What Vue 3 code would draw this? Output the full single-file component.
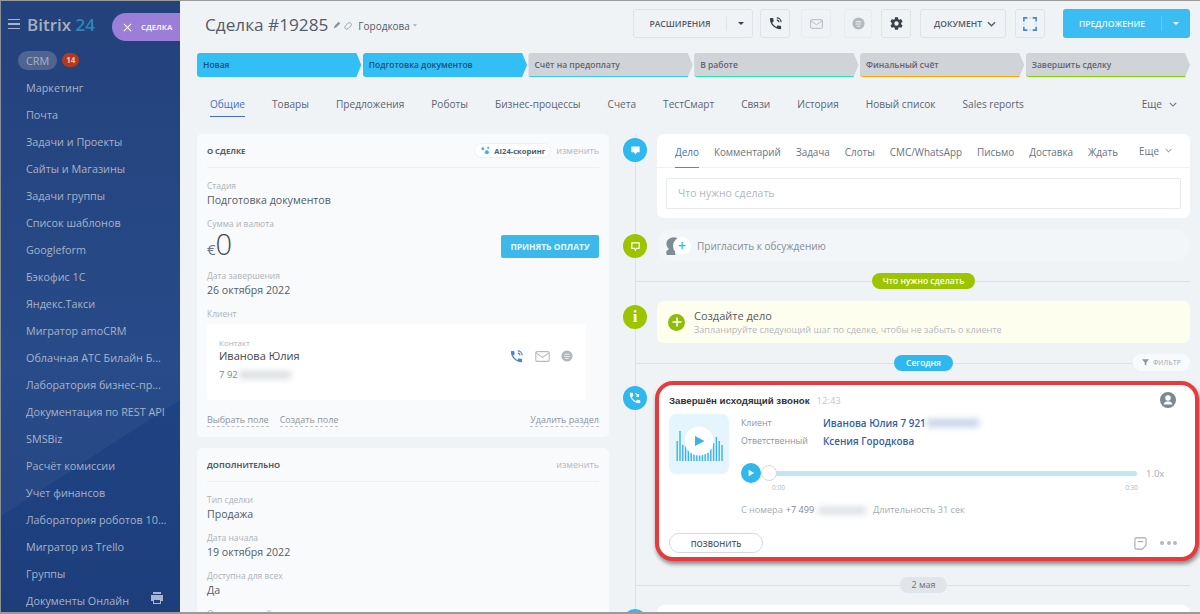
<script setup>
const menu = ['Маркетинг', 'Почта', 'Задачи и Проекты', 'Сайты и Магазины', 'Задачи группы', 'Список шаблонов', 'Googleform', 'Бэкофис 1С', 'Яндекс.Такси', 'Мигратор amoCRM', 'Облачная АТС Билайн Б...', 'Лаборатория бизнес-пр...', 'Документация по REST API', 'SMSBiz', 'Расчёт комиссии', 'Учет финансов', 'Лаборатория роботов 10...', 'Мигратор из Trello', 'Группы', 'Документы Онлайн']

const stages = [
  { name: 'Новая', cls: 'done' },
  { name: 'Подготовка документов', cls: 'done' },
  { name: 'Счёт на предоплату', color: '#3bc8f5' },
  { name: 'В работе', color: '#2fe6b0' },
  { name: 'Финальный счёт', color: '#ffa900' },
  { name: 'Завершить сделку', color: '#7bd500' }
]

const tabs = ['Товары', 'Предложения', 'Роботы', 'Бизнес-процессы', 'Счета', 'ТестСмарт', 'Связи', 'История', 'Новый список', 'Sales reports']
const editorTabs = ['Комментарий', 'Задача', 'Слоты', 'СМС/WhatsApp', 'Письмо', 'Доставка', 'Ждать']

const extraFields = [
  { label: 'Тип сделки', value: 'Продажа' },
  { label: 'Дата начала', value: '19 октября 2022' },
  { label: 'Доступна для всех', value: 'Да' },
  { label: 'Ответственный', value: '' }
]

const waveBars = [20, 30, 16, 24, 28, 18, 12, 8, 6, 6, 7, 8, 12, 18, 24, 20, 16]

const phonePath = 'M6.6 10.8c1.4 2.8 3.8 5.1 6.6 6.6l2.2-2.2c.3-.3.7-.4 1-.2 1.1.4 2.3.6 3.6.6.6 0 1 .4 1 1V20c0 .6-.4 1-1 1C10.6 21 3 13.4 3 4c0-.6.4-1 1-1h3.5c.6 0 1 .4 1 1 0 1.3.2 2.5.6 3.6.1.3 0 .7-.2 1z'
const gearPath = 'M19.4 13c.04-.32.1-.66.1-1s-.06-.68-.1-1l2.1-1.65c.2-.15.25-.42.12-.64l-2-3.46c-.12-.22-.38-.3-.6-.22l-2.5 1c-.5-.4-1.05-.7-1.66-.94l-.38-2.65A.5.5 0 0 0 14 2h-4a.5.5 0 0 0-.5.42l-.38 2.65c-.6.24-1.15.56-1.66.94l-2.5-1a.5.5 0 0 0-.6.22l-2 3.46c-.13.22-.07.5.12.64L4.6 11c-.04.32-.1.66-.1 1s.06.68.1 1l-2.1 1.65c-.2.15-.25.42-.12.64l2 3.46c.12.22.38.3.6.22l2.5-1c.5.4 1.05.7 1.66.94l.38 2.65c.04.24.25.42.5.42h4c.25 0 .46-.18.5-.42l.38-2.65c.6-.24 1.15-.56 1.66-.94l2.5 1c.22.08.48 0 .6-.22l2-3.46c.12-.22.07-.5-.12-.64zM12 15.5a3.5 3.5 0 1 1 0-7 3.5 3.5 0 0 1 0 7z'
</script>

<template>
  <div class="page">
    <aside class="sidebar">
      <div class="logo-row">
        <span class="burger"><i></i><i></i><i></i></span>
        <span class="logo">Bitrix <b>24</b></span>
      </div>
      <div class="crm-row">
        <span class="crm">CRM</span>
        <span class="badge">14</span>
      </div>
      <div v-for="item in menu" :key="item" class="menu-item">{{ item }}</div>
      <svg class="print" viewBox="0 0 14 14" width="14" height="14">
        <rect x="3" y="1" width="8" height="2" fill="#a9b6cb" />
        <path d="M1 4h12v6h-2v3H3v-3H1z" fill="#a9b6cb" />
        <rect x="4" y="9" width="6" height="3" fill="#1e4180" />
      </svg>
      <div class="close-pill">
        <svg viewBox="0 0 10 10" width="9" height="9"><path d="M1 1l8 8M9 1l-8 8" stroke="#fff" stroke-width="1.2" /></svg>
        <span>СДЕЛКА</span>
      </div>
    </aside>

    <main class="main">
      <header class="header">
        <h1 class="title">Сделка #19285</h1>
        <svg class="pen" viewBox="0 0 10 10" width="8" height="8"><path d="M1 9l1-3 5-5 2 2-5 5z" fill="#8a929c" /></svg>
        <svg class="chain" viewBox="0 0 10 10" width="9" height="9"><path d="M1.5 5.5l3-3a1.8 1.8 0 0 1 3 3l-3 3a1.8 1.8 0 0 1-3-3z" fill="none" stroke="#9aa1a9" stroke-width="1.1" /></svg>
        <span class="owner">Городкова</span>
        <span class="owner-caret"></span>

        <div class="tools">
          <button class="btn ext"><span>РАСШИРЕНИЯ</span><i class="sep"></i><i class="caret dark"></i></button>
          <button class="btn square">
            <svg viewBox="0 0 24 24" width="15" height="15"><path :d="phonePath" fill="#3a4049" /><path d="M14 3a7 7 0 0 1 7 7M14 6.5a3.5 3.5 0 0 1 3.5 3.5" fill="none" stroke="#3a4049" stroke-width="1.8" /></svg>
          </button>
          <button class="btn square mail">
            <svg viewBox="0 0 16 12" width="13" height="10"><rect x=".7" y=".7" width="14.6" height="10.6" rx="1.5" fill="none" stroke="#b5bac0" stroke-width="1.2" /><path d="M1 2l7 5 7-5" fill="none" stroke="#b5bac0" stroke-width="1.2" /></svg>
          </button>
          <button class="btn square chat">
            <svg viewBox="0 0 14 14" width="13" height="13"><circle cx="7" cy="7" r="6.5" fill="#b3b8bd" /><path d="M4 5h6M4 7.5h6M5 10h4" stroke="#e8ebee" stroke-width="1.2" /></svg>
          </button>
          <button class="btn square gear">
            <svg viewBox="0 0 24 24" width="15" height="15"><path :d="gearPath" fill="#3a4049" /></svg>
          </button>
          <button class="btn doc"><span>ДОКУМЕНТ</span><svg viewBox="0 0 10 6" width="9" height="6"><path d="M1 1l4 4 4-4" fill="none" stroke="#535c69" stroke-width="1.5" /></svg></button>
          <button class="btn square expand">
            <svg viewBox="0 0 16 16" width="14" height="14"><path d="M1 5V1h4M11 1h4v4M15 11v4h-4M5 15H1v-4" fill="none" stroke="#3f86d8" stroke-width="1.8" /><path d="M7 1h2M7 15h2M1 7v2M15 7v2" stroke="#b8d3f0" stroke-width="1.2" /></svg>
          </button>
          <button class="btn primary"><span>ПРЕДЛОЖЕНИЕ</span><i class="sep"></i><i class="caret"></i></button>
        </div>
      </header>

      <div class="stages">
        <div v-for="s in stages" :key="s.name" class="stage" :class="s.cls" :style="s.color ? { borderBottomColor: s.color } : null">{{ s.name }}</div>
      </div>

      <nav class="tabs">
        <span class="tab active">Общие</span>
        <span v-for="t in tabs" :key="t" class="tab">{{ t }}</span>
        <span class="tab more">Еще
          <svg viewBox="0 0 10 6" width="8" height="5"><path d="M1 1l4 4 4-4" fill="none" stroke="#6a737f" stroke-width="1.3" /></svg>
        </span>
      </nav>

      <div class="body">
        <section class="left">
          <div class="panel first">
            <div class="panel-head">
              <span class="panel-title">О СДЕЛКЕ</span>
              <span class="scoring">
                <svg viewBox="0 0 10 10" width="9" height="9"><circle cx="2" cy="3" r="1.6" fill="#2fb8ee" /><circle cx="8" cy="2" r="1.2" fill="#2fb8ee" /><circle cx="6.5" cy="7" r="2.2" fill="#2fb8ee" /></svg>
                AI24-скоринг
              </span>
              <span class="edit">изменить</span>
            </div>
            <div class="label l-stage">Стадия</div>
            <div class="value">Подготовка документов</div>
            <div class="label l-sum">Сумма и валюта</div>
            <div class="sum-row">
              <span class="sum"><small>€</small>0</span>
              <button class="pay">ПРИНЯТЬ ОПЛАТУ</button>
            </div>
            <div class="label l-date">Дата завершения</div>
            <div class="value">26 октября 2022</div>
            <div class="label l-client">Клиент</div>
            <div class="client">
              <div class="client-info">
                <div class="contact-label">Контакт</div>
                <div class="contact-name">Иванова Юлия</div>
                <div class="contact-phone">7 92<i class="blur"></i></div>
              </div>
              <div class="client-icons">
                <svg viewBox="0 0 24 24" width="15" height="15"><path :d="phonePath" fill="#4a86d0" /><path d="M14 3a7 7 0 0 1 7 7M14 6.5a3.5 3.5 0 0 1 3.5 3.5" fill="none" stroke="#4a86d0" stroke-width="1.8" /></svg>
                <svg viewBox="0 0 16 12" width="15" height="11"><rect x=".7" y=".7" width="14.6" height="10.6" rx="1.5" fill="none" stroke="#b5bac0" stroke-width="1.2" /><path d="M1 2l7 5 7-5" fill="none" stroke="#b5bac0" stroke-width="1.2" /></svg>
                <svg viewBox="0 0 14 14" width="12" height="12"><circle cx="7" cy="7" r="6.5" fill="#b3b8bd" /><path d="M4 5h6M4 7.5h6M5 10h4" stroke="#e8ebee" stroke-width="1.2" /></svg>
              </div>
            </div>
            <div class="panel-links">
              <a>Выбрать поле</a>
              <a>Создать поле</a>
              <a class="right">Удалить раздел</a>
            </div>
          </div>

          <div class="panel second">
            <div class="panel-head">
              <span class="panel-title">ДОПОЛНИТЕЛЬНО</span>
              <span class="edit">изменить</span>
            </div>
            <div v-for="f in extraFields" :key="f.label" class="field">
              <div class="label">{{ f.label }}</div>
              <div class="value">{{ f.value }}</div>
            </div>
          </div>
        </section>

        <section class="timeline">
          <div class="row">
            <span class="dot blue">
              <svg viewBox="0 0 12 12" width="11" height="11"><path d="M1.5 1.5h9V8h-3L6 10.5 4.5 8h-3z" fill="#fff" /></svg>
            </span>
            <div class="card editor">
              <div class="editor-tabs">
                <span class="etab active">Дело</span>
                <span v-for="t in editorTabs" :key="t" class="etab">{{ t }}</span>
                <span class="etab more">Еще
                  <svg viewBox="0 0 10 6" width="7" height="5"><path d="M1 1l4 4 4-4" fill="none" stroke="#6a737f" stroke-width="1.3" /></svg>
                </span>
              </div>
              <div class="editor-input">Что нужно сделать</div>
            </div>
          </div>

          <div class="row">
            <span class="dot green">
              <svg viewBox="0 0 12 12" width="11" height="11"><path d="M2 2h8v6H7l-1 2-1-2H2z" fill="none" stroke="#fff" stroke-width="1.3" /></svg>
            </span>
            <div class="invite">
              <span class="invite-icon">
                <svg viewBox="0 0 14 18" width="15" height="18"><path d="M12 1.5A7 7 0 0 0 5 1C2 2 .5 5 1 8c.5 2 1.5 3 2.5 4L1 14c-.5 2 0 3.500 .5 4H10c-.5-1.500-.5-3 0-4l-2-1.500c2-.5 3-2 3-3z" fill="#7f8b98" /></svg>
                <span class="plus-badge">+</span>
              </span>
              <span>Пригласить к обсуждению</span>
            </div>
          </div>

          <div class="divider"><span class="pill lime">Что нужно сделать</span></div>

          <div class="row">
            <span class="dot green info">i</span>
            <div class="todo">
              <span class="todo-plus">
                <svg viewBox="0 0 10 10" width="10" height="10"><path d="M5 .5v9M.5 5h9" stroke="#fff" stroke-width="1.5" /></svg>
              </span>
              <div>
                <div class="todo-title">Создайте дело</div>
                <div class="todo-sub">Запланируйте следующий шаг по сделке, чтобы не забыть о клиенте</div>
              </div>
            </div>
          </div>

          <div class="divider">
            <span class="pill sky">Сегодня</span>
            <span class="filter">
              <svg viewBox="0 0 10 10" width="7" height="7"><path d="M0 .5h10L6.2 5v4.5L3.8 8V5z" fill="#8f97a0" /></svg>
              ФИЛЬТР
            </span>
          </div>

          <div class="row call-row">
            <span class="dot blue call-dot">
              <svg viewBox="0 0 24 24" width="14" height="14"><path :d="phonePath" fill="#fff" /><path d="M13 4l5 5M14 9h4V5" fill="none" stroke="#fff" stroke-width="2" /></svg>
            </span>
            <div class="call">
              <div class="call-head">
                <span class="call-title">Завершён исходящий звонок</span>
                <span class="call-time">12:43</span>
                <svg class="call-user" viewBox="0 0 16 16" width="16" height="16"><circle cx="8" cy="8" r="8" fill="#7d8894" /><circle cx="8" cy="6" r="2.8" fill="#fff" /><path d="M3.5 12.5c.5-2.5 2.5-3 4.5-3s4 .5 4.5 3z" fill="#fff" /></svg>
              </div>
              <div class="call-main">
                <div class="tile">
                  <svg viewBox="0 0 60 60" width="60" height="60">
                    <rect v-for="(h, i) in waveBars" :key="i" :x="7.5 + i * 2.8" :y="47 - h" width="1.4" :height="h" fill="#37b5ea" />
                    <circle cx="30" cy="27" r="14.5" fill="#fff" />
                    <path d="M26 22l9.5 5-9.5 5z" fill="#37b5ea" />
                  </svg>
                </div>
                <div class="call-info">
                  <div class="info-row"><span class="info-label">Клиент</span><a class="info-link">Иванова Юлия 7 921<i class="blur link-blur"></i></a></div>
                  <div class="info-row"><span class="info-label">Ответственный</span><a class="info-link">Ксения Городкова</a></div>
                  <div class="player">
                    <span class="play">
                      <svg viewBox="0 0 10 10" width="8" height="8"><path d="M2 1l7 4-7 4z" fill="#fff" /></svg>
                    </span>
                    <div class="track"><span class="knob"></span></div>
                    <span class="speed">1.0x</span>
                  </div>
                  <div class="times"><span>0:00</span><span>0:30</span></div>
                  <div class="call-meta">С номера <b>+7 499</b><i class="blur num-blur"></i>Длительность 31 сек</div>
                </div>
              </div>
              <div class="call-foot">
                <button class="callback">ПОЗВОНИТЬ</button>
                <svg viewBox="0 0 14 14" width="13" height="13"><path d="M1 2.5A1.5 1.5 0 0 1 2.5 1h9A1.5 1.5 0 0 1 13 2.5V9l-4 4H2.5A1.5 1.5 0 0 1 1 11.5z" fill="none" stroke="#a4abb3" stroke-width="1.2" /><path d="M4 5h6" stroke="#a4abb3" stroke-width="1.2" /></svg>
                <span class="dots"><i></i><i></i><i></i></span>
              </div>
            </div>
          </div>

          <div class="divider date"><span class="pill gray">2 мая</span></div>

          <div class="row">
            <span class="dot blue"></span>
            <div class="card last"></div>
          </div>
        </section>
      </div>
    </main>
  </div>
</template>

<style>
html, body {
  margin: 0;
  background: #fff;
}
</style>

<style scoped>
.page {
  display: flex;
  width: 1200px;
  height: 614px;
  overflow: hidden;
  box-sizing: border-box;
  border-top: 1px solid #9a9a9a;
  border-bottom: 2px solid #9a9a9a;
  border-left: 1px solid #8a8f96;
  font-family: "Open Sans", "Liberation Sans", sans-serif;
  color: #535c69;
}

/* sidebar */
.sidebar {
  position: relative;
  flex: 0 0 179px;
  padding-top: 11px;
  background:
    linear-gradient(147deg, rgba(255, 255, 255, 0.04) 0 70.7%, rgba(255, 255, 255, 0) 70.9%),
    linear-gradient(180deg, #1a3a76, #1f4484 60%, #1d3e7b);
  color: #a8b2c6;
}
.logo-row {
  display: flex;
  align-items: center;
  height: 24px;
  padding-left: 7px;
}
.burger {
  display: flex;
  flex-direction: column;
  gap: 3px;
  width: 12px;
  margin-right: 7px;
}
.burger i {
  display: block;
  height: 1.5px;
  background: #a9b3c6;
}
.logo {
  font-size: 17px;
  font-weight: 600;
  color: #a7afbe;
  white-space: nowrap;
}
.logo b {
  font-weight: 600;
  color: #2b87b8;
}
.crm-row {
  display: flex;
  align-items: center;
  gap: 5px;
  height: 20px;
  margin-top: 14px;
  margin-left: 17px;
}
.crm {
  padding: 0 8px;
  height: 19px;
  line-height: 19px;
  border-radius: 10px;
  background: #4f6591;
  font-size: 10.8px;
}
.badge {
  padding: 0 4px;
  height: 14px;
  line-height: 14px;
  border-radius: 7px;
  background: #b5391f;
  color: #e8c9bd;
  font-size: 8px;
  font-weight: 700;
}
.menu-item {
  height: 27px;
  line-height: 27px;
  padding-left: 25px;
  font-size: 10.8px;
  white-space: nowrap;
}
.crm-row + .menu-item {
  margin-top: 4px;
}
.print {
  position: absolute;
  left: 149px;
  top: 590px;
}
.close-pill {
  position: absolute;
  top: 12px;
  right: 0;
  display: flex;
  align-items: center;
  gap: 9px;
  width: 68px;
  height: 28px;
  box-sizing: border-box;
  padding-left: 11px;
  border-radius: 14px 0 0 14px;
  background: #9a7ed8;
  color: #f1edf9;
  font-size: 7.7px;
  font-weight: 700;
}

/* main column */
.main {
  flex: 1;
  min-width: 0;
  padding: 8px 10px 0 17px;
  background: #eff3f6;
}
.header {
  display: flex;
  align-items: center;
  height: 29px;
  padding-left: 8px;
}
.title {
  margin: 2px 0 0;
  font-size: 17.2px;
  font-weight: 400;
  color: #535c69;
  white-space: nowrap;
}
.pen {
  margin-left: 5px;
  margin-top: 3px;
}
.chain {
  margin-left: 3px;
  margin-top: 3px;
}
.owner {
  margin-left: 5px;
  margin-top: 4px;
  font-size: 10px;
}
.owner-caret {
  margin: 4px 0 0 3px;
  border: 2.5px solid transparent;
  border-top: 3px solid #b5bac0;
  border-bottom: 0;
}
.tools {
  display: flex;
  margin-left: auto;
}
.btn {
  display: flex;
  align-items: center;
  justify-content: center;
  box-sizing: border-box;
  height: 29px;
  padding: 0;
  border: 1px solid #dfe3e7;
  border-radius: 3px;
  background: transparent;
  color: #535c69;
  font-family: inherit;
  font-size: 8.6px;
  font-weight: 600;
}
.ext {
  width: 120px;
}
.ext span {
  width: 91px;
}
.sep {
  width: 1px;
  height: 15px;
  background: #dfe3e7;
}
.ext .sep + .caret {
  margin-left: 11px;
}
.caret {
  width: 0;
  margin-right: 8px;
  border: 3px solid transparent;
  border-top: 3px solid #fff;
  border-bottom: 0;
}
.caret.dark {
  border-top-color: #3a4049;
}
.square {
  width: 30px;
  margin-left: 7px;
}
.mail {
  margin-left: 11px;
  border-color: #e8ebee;
}
.chat {
  width: 28px;
  margin-left: 13px;
  border-color: #e8ebee;
}
.square.gear {
  margin-left: 9px;
}
.doc {
  width: 86px;
  margin-left: 9px;
  padding-left: 4px;
  gap: 5px;
}
.expand {
  margin-left: 9px;
}
.primary {
  justify-content: flex-start;
  width: 127px;
  margin-left: 18px;
  border: 0;
  background: #3bbcf2;
  color: #eaf7fd;
}
.primary span {
  width: 98px;
}
.primary .caret {
  margin: 0 0 0 11px;
}
.primary .sep {
  background: #63caf4;
}

.stages {
  display: flex;
  gap: 1.4px;
  margin-top: 15px;
}
.stage {
  flex: 1;
  box-sizing: border-box;
  height: 24px;
  line-height: 24px;
  padding-left: 6px;
  border-radius: 3px 0 0 3px;
  border-bottom: 1.5px solid #d0d3d8;
  background: #d0d3d8;
  clip-path: polygon(0 0, calc(100% - 5px) 0, 100% 50%, calc(100% - 5px) 100%, 0 100%);
  color: #5d6672;
  font-size: 8.5px;
  font-weight: 600;
  white-space: nowrap;
}
.stage.done {
  border-bottom: 0;
  background: #32bff6;
  color: #1e4f70;
}

.tabs {
  display: flex;
  gap: 27px;
  height: 24px;
  margin-top: 16px;
  padding-left: 13px;
}
.tab {
  font-size: 10.1px;
  font-weight: 500;
  line-height: 22px;
  color: #5c6570;
  white-space: nowrap;
}
.tab.active {
  color: #3f6fc8;
  border-bottom: 1px solid #3f6fc8;
  height: 23px;
}
.tab.more {
  display: flex;
  align-items: center;
  gap: 7px;
  height: 22px;
  margin-left: auto;
  margin-right: 13px;
}

.body {
  display: flex;
  margin-top: 17px;
}

/* left column */
.left {
  flex: 0 0 412px;
}
.panel {
  box-sizing: border-box;
  padding: 0 10px;
  border-radius: 5px;
  background: #f8fafc;
}
.panel.first {
  height: 303px;
}
.panel.second {
  margin-top: 11px;
  height: 180px;
}
.panel-head {
  display: flex;
  align-items: center;
  box-sizing: border-box;
  height: 34px;
  border-bottom: 1px solid #eef1f4;
}
.panel-title {
  margin-right: auto;
  font-size: 7.7px;
  font-weight: 700;
  color: #535c69;
}
.scoring {
  display: flex;
  align-items: center;
  gap: 4px;
  box-sizing: border-box;
  width: 77px;
  height: 15px;
  padding-left: 6px;
  border: 1px solid #eff2f5;
  border-radius: 8px;
  background: #fff;
  font-size: 7.6px;
  font-weight: 700;
  white-space: nowrap;
}
.edit {
  margin-left: 5px;
  font-size: 9px;
  color: #b3b8bf;
}
.label {
  font-size: 8.5px;
  line-height: 13px;
  color: #aeb3ba;
}
.value {
  font-size: 10.6px;
  line-height: 17px;
  color: #535c69;
}
.l-stage {
  margin-top: 10.5px;
}
.l-sum {
  margin-top: 8px;
}
.sum-row {
  display: flex;
  align-items: center;
  justify-content: space-between;
  height: 29px;
  margin-top: 2px;
}
.sum {
  font-size: 29px;
  font-weight: 300;
  line-height: 29px;
  color: #444c57;
}
.sum small {
  font-size: 15px;
  font-weight: 400;
  color: #6a737f;
}
.pay {
  width: 98px;
  height: 23px;
  padding: 0;
  border: 0;
  border-radius: 2px;
  background: #3db8ea;
  color: #eaf7fd;
  font-family: inherit;
  font-size: 8.5px;
  font-weight: 700;
}
.l-date {
  margin-top: 8.5px;
}
.l-client {
  margin-top: 8px;
}
.client {
  display: flex;
  align-items: center;
  justify-content: space-between;
  box-sizing: border-box;
  width: 379px;
  height: 76px;
  margin-top: 3.5px;
  padding: 0 13px 0 12px;
  border-radius: 3px;
  background: #fff;
}
.client-info {
  margin-top: -4px;
}
.contact-label {
  font-size: 8px;
  line-height: 11px;
  color: #aeb3ba;
}
.contact-name {
  font-size: 11px;
  line-height: 16px;
  color: #3f4650;
}
.contact-phone {
  display: flex;
  align-items: center;
  margin-top: 3px;
  font-size: 9.5px;
  line-height: 15px;
  color: #7b838d;
}
.blur {
  display: inline-block;
  width: 52px;
  height: 8px;
  margin-left: 1px;
  background: #d9dde1;
  filter: blur(3px);
}
.client-icons {
  display: flex;
  align-items: center;
  gap: 11px;
  margin-top: -11px;
}
.panel-links {
  display: flex;
  gap: 11px;
  margin-top: 14px;
  font-size: 9px;
  color: #8d949d;
}
.panel-links a {
  border-bottom: 1px dashed #bfc4ca;
  line-height: 12px;
}
.panel-links .right {
  margin-left: auto;
}
.field {
  margin-top: 11px;
}
.field + .field {
  margin-top: 8px;
}

/* timeline */
.timeline {
  position: relative;
  flex: 1;
  min-width: 0;
  margin-left: 14px;
}
.timeline::before {
  content: "";
  position: absolute;
  left: 12px;
  top: 0;
  bottom: -100px;
  width: 1px;
  background: #dde2e6;
}
.row {
  position: relative;
  display: flex;
  gap: 10px;
  margin-top: 12px;
}
.row:first-child {
  margin-top: 0;
}
.dot {
  display: flex;
  flex: 0 0 24px;
  align-items: center;
  justify-content: center;
  width: 24px;
  height: 24px;
  margin-top: 4px;
  border-radius: 50%;
}
.dot.blue {
  background: #2fb8ee;
}
.dot.green {
  background: #9dc400;
}
.info {
  font-family: "Liberation Serif", serif;
  font-size: 17px;
  font-weight: 700;
  color: #fff;
}
.card {
  flex: 1;
  min-width: 0;
  border-radius: 7px;
  background: #fff;
}
.editor {
  height: 84px;
}
.editor-tabs {
  display: flex;
  gap: 15px;
  box-sizing: border-box;
  height: 34px;
  padding-left: 18px;
  border-bottom: 1px solid #eef1f4;
}
.etab {
  font-size: 9.9px;
  line-height: 36px;
  color: #6a737f;
  white-space: nowrap;
}
.etab.active {
  box-sizing: border-box;
  height: 34px;
  border-bottom: 1px solid #3f8fd8;
  color: #3f6fc8;
}
.etab.more {
  display: flex;
  align-items: center;
  gap: 6px;
  margin-left: auto;
  margin-right: 18px;
}
.editor-input {
  box-sizing: border-box;
  height: 31px;
  margin: 10px 9px 0;
  padding-left: 11px;
  border: 1px solid #e8ebee;
  border-radius: 2px;
  font-size: 10.5px;
  line-height: 29px;
  color: #b3b8bf;
}
.invite {
  display: flex;
  flex: 1;
  align-items: center;
  gap: 6px;
  height: 31px;
  padding-left: 8px;
  border-radius: 15px;
  background: #f3f6f8;
  font-size: 10px;
  color: #858d97;
}
.invite-icon {
  position: relative;
  display: block;
  width: 26px;
  height: 18px;
}
.plus-badge {
  position: absolute;
  left: 8px;
  top: 0;
  width: 18px;
  height: 18px;
  border-radius: 50%;
  background: #fff;
  color: #2fb8ee;
  font-size: 14px;
  font-weight: 600;
  line-height: 17px;
  text-align: center;
}
.divider {
  position: relative;
  display: flex;
  justify-content: center;
  height: 16px;
  margin-top: 12px;
  padding-left: 34px;
}
.divider::before {
  content: "";
  position: absolute;
  left: 12px;
  right: 0;
  top: 8px;
  height: 1px;
  background: #dde2e6;
}
.pill {
  position: relative;
  padding: 0 11px;
  border-radius: 8px;
  font-size: 8.5px;
  font-weight: 600;
  line-height: 16px;
  color: #fff;
  white-space: nowrap;
}
.pill.lime {
  background: #9dc400;
}
.pill.sky {
  padding: 0 12px;
  background: #2fb8ee;
}
.pill.gray {
  background: #dfe5e8;
  color: #6a737f;
  font-size: 9px;
  font-weight: 500;
}
.filter {
  position: absolute;
  right: 0;
  top: -1px;
  display: flex;
  align-items: center;
  gap: 4px;
  height: 17px;
  padding: 0 9px;
  border-radius: 8px;
  background: #f8fafb;
  font-size: 6.5px;
  color: #9aa1a9;
  letter-spacing: 0.3px;
}
.todo {
  display: flex;
  flex: 1;
  align-items: center;
  gap: 9px;
  height: 42px;
  padding-left: 11px;
  border-radius: 7px;
  background: #fefeee;
}
.todo-plus {
  display: flex;
  align-items: center;
  justify-content: center;
  width: 17px;
  height: 17px;
  border-radius: 50%;
  background: #8fbc0a;
}
.todo-title {
  font-size: 11px;
  line-height: 14px;
  color: #535c69;
}
.todo-sub {
  font-size: 9.1px;
  line-height: 13px;
  color: #b3b8bf;
}

/* call card with the red highlight */
.call-row {
  margin-top: 10px;
}
.call-dot {
  margin-top: 5px;
}
.call {
  flex: 1;
  min-width: 0;
  box-sizing: border-box;
  height: 180px;
  margin: 0 -9px 0 -2px;
  padding: 5px 16px 0 10px;
  border: 4px solid #e8393b;
  border-radius: 18px;
  background: #fff;
  box-shadow: 1px 3px 4px rgba(0, 0, 0, 0.45);
}
.call-head {
  display: flex;
  align-items: center;
  height: 20px;
}
.call-title {
  font-family: "Liberation Sans", sans-serif;
  font-size: 9.7px;
  font-weight: 700;
  color: #333;
}
.call-time {
  margin-left: 7px;
  font-size: 9.5px;
  color: #c3c7cc;
}
.call-user {
  margin-left: auto;
  margin-right: 3px;
}
.call-main {
  display: flex;
  gap: 12px;
  margin-top: 4px;
}
.tile {
  flex: 0 0 60px;
  height: 60px;
  border-radius: 7px;
  background: #e5f5fd;
}
.call-info {
  flex: 1;
  min-width: 0;
}
.info-row {
  display: flex;
  align-items: center;
  height: 18px;
}
.info-label {
  width: 82px;
  font-size: 8.8px;
  color: #8d949d;
}
.info-link {
  display: flex;
  align-items: center;
  font-size: 9.9px;
  font-weight: 600;
  color: #33609f;
}
.link-blur {
  width: 52px;
  background: #c4d3e6;
}
.player {
  display: flex;
  align-items: center;
  height: 24px;
  margin-top: 11px;
}
.play {
  display: flex;
  align-items: center;
  justify-content: center;
  width: 20px;
  height: 20px;
  border-radius: 50%;
  background: #2fb8ee;
}
.track {
  position: relative;
  width: 376px;
  height: 5px;
  border-radius: 3px;
  background: #c0e6f8;
}
.knob {
  position: absolute;
  left: 0;
  top: -6px;
  width: 16px;
  height: 16px;
  box-sizing: border-box;
  border: 1px solid #d5d9dd;
  border-radius: 50%;
  background: #fff;
}
.speed {
  margin-left: 9px;
  font-size: 9.5px;
  color: #a4abb3;
}
.times {
  display: flex;
  justify-content: space-between;
  width: 366px;
  margin-top: -3px;
  margin-left: 31px;
  font-size: 6.5px;
  line-height: 11px;
  color: #b3b8bf;
}
.call-meta {
  display: flex;
  align-items: center;
  margin-top: 10px;
  font-size: 9.1px;
  line-height: 14px;
  color: #a4abb3;
}
.call-meta b {
  margin-left: 3px;
  font-weight: 400;
  color: #808892;
}
.num-blur {
  width: 48px;
  height: 7px;
  margin: 0 7px 0 4px;
}
.call-foot {
  display: flex;
  align-items: center;
  margin-top: 16px;
  padding-right: 2px;
}
.callback {
  width: 94px;
  height: 20px;
  padding: 0;
  margin-right: auto;
  border: 1px solid #d5d9dd;
  border-radius: 10px;
  background: #fff;
  color: #535c69;
  font-family: inherit;
  font-size: 8px;
  font-weight: 600;
}
.dots {
  display: flex;
  gap: 2.5px;
  margin-left: 13px;
}
.dots i {
  width: 4px;
  height: 4px;
  border-radius: 50%;
  background: #b3b8bf;
}
.divider.date {
  margin-top: 16px;
}
.last {
  height: 40px;
}
</style>
